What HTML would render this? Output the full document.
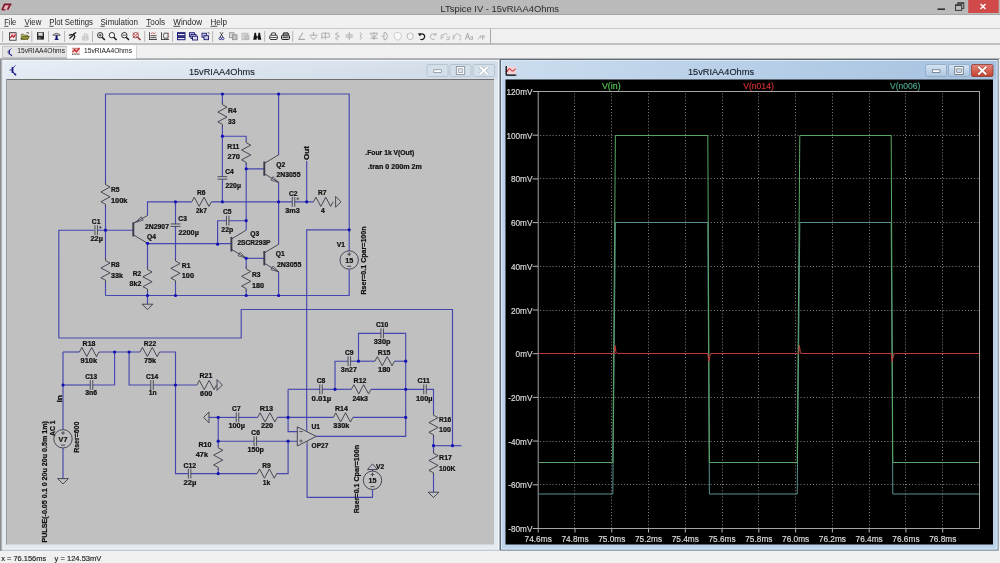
<!DOCTYPE html><html><head><meta charset="utf-8"><style>html,body{margin:0;padding:0;overflow:hidden;background:#f0f0f0}svg{display:block}text{font-family:"Liberation Sans", sans-serif}</style></head><body><svg width="<function W at 0x7f4d14208fe0>" height="563" viewBox="0 0 <function W at 0x7f4d14208fe0> 563" style="will-change:transform"><rect x="0" y="0" width="1000" height="563" fill="#f0f0f0" /><rect x="0" y="0" width="1000" height="14.5" fill="#bababa" /><line x1="0" y1="14.5" x2="1000" y2="14.5" stroke="#a6a6a6" stroke-width="1" /><text x="440.5" y="11.6" font-size="9.4" fill="#2b2b2b" font-weight="normal" text-anchor="start" textLength="118.5" lengthAdjust="spacingAndGlyphs" >LTspice IV - 15vRIAA4Ohms</text><path d="M4.2 4.2 L11.6 4.2 L9.4 9.8 L2 9.8 Z" fill="#e4b4bc" stroke="none"/><path d="M2.0 10 L4.6 4.4 L11.4 4.4 M10.2 4.6 L7.6 9.6" fill="none" stroke="#7e1424" stroke-width="1.7"/><path d="M2.2 9.8 L5.5 9.8" fill="none" stroke="#7e1424" stroke-width="1.2"/><line x1="937.5" y1="9.2" x2="945" y2="9.2" stroke="#2e2e2e" stroke-width="1.6" /><rect x="957.8" y="2.8" width="6" height="5.6" fill="none" stroke="#3a3a3a" stroke-width="1"/><rect x="955.5" y="4.8" width="6.2" height="5.6" fill="#bababa" stroke="#3a3a3a" stroke-width="1"/><line x1="955.5" y1="5.4" x2="961.7" y2="5.4" stroke="#3a3a3a" stroke-width="1.2"/><line x1="957.8" y1="3.3" x2="963.8" y2="3.3" stroke="#3a3a3a" stroke-width="1.2"/><rect x="968.2" y="0" width="30.5" height="13" fill="#d04a4a" /><path d="M980.5 4 L985.5 9 M985.5 4 L980.5 9" stroke="#fff" stroke-width="1.4"/><rect x="0" y="15" width="1000" height="13" fill="#f0f0f0" /><line x1="0" y1="28.5" x2="1000" y2="28.5" stroke="#c9c9c9" stroke-width="1" /><text x="4.2" y="24.7" font-size="8.6" fill="#262626" font-weight="normal" text-anchor="start" textLength="12.1" lengthAdjust="spacingAndGlyphs" >File</text><text x="24.5" y="24.7" font-size="8.6" fill="#262626" font-weight="normal" text-anchor="start" textLength="16.8" lengthAdjust="spacingAndGlyphs" >View</text><text x="49.3" y="24.7" font-size="8.6" fill="#262626" font-weight="normal" text-anchor="start" textLength="43.7" lengthAdjust="spacingAndGlyphs" >Plot Settings</text><text x="100.5" y="24.7" font-size="8.6" fill="#262626" font-weight="normal" text-anchor="start" textLength="37.5" lengthAdjust="spacingAndGlyphs" >Simulation</text><text x="146.3" y="24.7" font-size="8.6" fill="#262626" font-weight="normal" text-anchor="start" textLength="18.7" lengthAdjust="spacingAndGlyphs" >Tools</text><text x="173.3" y="24.7" font-size="8.6" fill="#262626" font-weight="normal" text-anchor="start" textLength="28.7" lengthAdjust="spacingAndGlyphs" >Window</text><text x="210.5" y="24.7" font-size="8.6" fill="#262626" font-weight="normal" text-anchor="start" textLength="16.5" lengthAdjust="spacingAndGlyphs" >Help</text><line x1="4.2" y1="26.3" x2="8.45" y2="26.3" stroke="#262626" stroke-width="0.8" /><line x1="24.5" y1="26.3" x2="28.75" y2="26.3" stroke="#262626" stroke-width="0.8" /><line x1="49.3" y1="26.3" x2="53.55" y2="26.3" stroke="#262626" stroke-width="0.8" /><line x1="100.5" y1="26.3" x2="104.75" y2="26.3" stroke="#262626" stroke-width="0.8" /><line x1="146.3" y1="26.3" x2="150.55" y2="26.3" stroke="#262626" stroke-width="0.8" /><line x1="173.3" y1="26.3" x2="180.10000000000002" y2="26.3" stroke="#262626" stroke-width="0.8" /><line x1="210.5" y1="26.3" x2="217.3" y2="26.3" stroke="#262626" stroke-width="0.8" /><rect x="0" y="29" width="1000" height="15" fill="#f0f0f0" /><line x1="0" y1="44" x2="1000" y2="44" stroke="#8f8f8f" stroke-width="1" /><line x1="2.6" y1="31" x2="2.6" y2="42" stroke="#b5b5b5" stroke-width="1" /><line x1="31.8" y1="31" x2="31.8" y2="42" stroke="#b5b5b5" stroke-width="1" /><line x1="48.6" y1="31" x2="48.6" y2="42" stroke="#b5b5b5" stroke-width="1" /><line x1="64.6" y1="31" x2="64.6" y2="42" stroke="#b5b5b5" stroke-width="1" /><line x1="92.5" y1="31" x2="92.5" y2="42" stroke="#b5b5b5" stroke-width="1" /><line x1="144.7" y1="31" x2="144.7" y2="42" stroke="#b5b5b5" stroke-width="1" /><line x1="172.6" y1="31" x2="172.6" y2="42" stroke="#b5b5b5" stroke-width="1" /><line x1="212.6" y1="31" x2="212.6" y2="42" stroke="#b5b5b5" stroke-width="1" /><line x1="264.7" y1="31" x2="264.7" y2="42" stroke="#b5b5b5" stroke-width="1" /><line x1="292.7" y1="31" x2="292.7" y2="42" stroke="#b5b5b5" stroke-width="1" /><line x1="490.5" y1="28.5" x2="490.5" y2="44" stroke="#a8a8a8" stroke-width="1" /><g transform="translate(9.1,32.2)"><rect x="0.5" y="0.5" width="6.5" height="7.5" fill="#fff" stroke="#303030" stroke-width="0.9"/><path d="M1.2 6 L3 3 L4.5 5 L6.5 2" stroke="#c02a3a" stroke-width="1.4" fill="none"/><rect x="1" y="1" width="5.5" height="1.2" fill="#e8a0a8"/></g><g transform="translate(20.8,32.2)"><path d="M0.5 2 L3 2 L4 3 L7 3 L7 7 L0.5 7 Z" fill="#c8c070" stroke="#606020" stroke-width="0.7"/><path d="M0 7 L2 4.2 L8.5 4.2 L7 7 Z" fill="#9a9a40" stroke="#404010" stroke-width="0.7"/><path d="M5.5 0.5 L7.5 0.2 L8 1.8" stroke="#404040" stroke-width="0.7" fill="none"/></g><g transform="translate(37,32.2)"><rect x="0" y="0" width="7" height="7.4" fill="#2a2a2a"/><rect x="1.3" y="0.6" width="4.4" height="3" fill="#d8d8d8"/><rect x="1.5" y="5" width="2" height="1.8" fill="#777"/></g><g transform="translate(52.3,32.2)"><path d="M0.5 3 Q4.2 -0.8 8 3 L0.5 3 Z" fill="#e8e8e8" stroke="#404040" stroke-width="0.8"/><rect x="3.3" y="3" width="2" height="4.8" fill="#141470"/><rect x="2.4" y="6.6" width="3.8" height="1.2" fill="#141470"/></g><g transform="translate(68.8,32.2)"><path d="M1 6 L3.5 4 L5 1.5 L7 0.5 M5 1.5 L6 4.5 L4.5 7.5 M3.2 2.5 L0.5 3" stroke="#161616" stroke-width="1.2" fill="none" stroke-linecap="round"/></g><g transform="translate(81.6,32.2)"><path d="M1.5 7.5 L1.5 3 M3 7.5 L3 1 M4.5 7.5 L4.5 0.8 M6 7.5 L6 2 M1 5 L6.5 5 L6.5 7.8 L1 7.8 Z" stroke="#c4c4c4" stroke-width="0.9" fill="#ececec"/></g><g transform="translate(96.9,32.2)"><circle cx="3.3" cy="3" r="2.7" fill="#fafafa" stroke="#1e1e1e" stroke-width="0.9"/><path d="M5.2 5 L8 7.8" stroke="#1e1e1e" stroke-width="1.6"/><path d="M1.8 3 L4.8 3 M3.3 1.5 L3.3 4.5" stroke="#1e1e1e" stroke-width="0.8"/></g><g transform="translate(108.6,32.2)"><circle cx="3.3" cy="3" r="2.7" fill="#fafafa" stroke="#1e1e1e" stroke-width="0.9"/><path d="M5.2 5 L8 7.8" stroke="#1e1e1e" stroke-width="1.6"/></g><g transform="translate(121,32.2)"><circle cx="3.3" cy="3" r="2.7" fill="#fafafa" stroke="#1e1e1e" stroke-width="0.9"/><path d="M5.2 5 L8 7.8" stroke="#1e1e1e" stroke-width="1.6"/><path d="M1.8 3 L4.8 3" stroke="#1e1e1e" stroke-width="0.8"/></g><g transform="translate(132.4,32.2)"><circle cx="3.3" cy="3" r="2.7" fill="#fafafa" stroke="#8a3a3a" stroke-width="0.9"/><path d="M5.2 5 L8 7.8" stroke="#8a3a3a" stroke-width="1.6"/><path d="M0.5 0.5 L6 6 M6 0.5 L0.5 6" stroke="#c04040" stroke-width="0.9"/></g><g transform="translate(149,32.2)"><path d="M0 7.3 L8 7.3 M0.5 0 L0.5 7.3 M1.5 5.5 L7.5 5.5 M1.5 3.5 L7.5 3.5" stroke="#202020" stroke-width="0.8"/><path d="M2 1.5 L3.5 0.5 L5 1.5 L6.5 0.5" stroke="#c04040" stroke-width="0.8" fill="none"/></g><g transform="translate(161,32.2)"><path d="M0 7.3 L8 7.3 M0.5 0 L0.5 7.3" stroke="#202020" stroke-width="0.8"/><path d="M3 1 L7 1 L7 6 L3 6 Q2 3.5 3 1" stroke="#303030" stroke-width="0.8" fill="none"/><path d="M7.5 0.5 L7.5 6.5" stroke="#c04040" stroke-width="0.6" stroke-dasharray="1 1"/></g><g transform="translate(177,32.2)"><rect x="0.5" y="0.5" width="7.5" height="3" fill="#e8e8f4" stroke="#1a1a70" stroke-width="1"/><rect x="0.5" y="4.5" width="7.5" height="3" fill="#e8e8f4" stroke="#1a1a70" stroke-width="1"/><rect x="0.5" y="0.5" width="7.5" height="1.2" fill="#1a1a70"/><rect x="0.5" y="4.5" width="7.5" height="1.2" fill="#1a1a70"/></g><g transform="translate(189,32.2)"><rect x="0.5" y="0.5" width="5" height="4" fill="#c8c8e0" stroke="#1a1a70" stroke-width="0.9"/><rect x="2" y="2.2" width="5" height="4" fill="#c8c8e0" stroke="#1a1a70" stroke-width="0.9"/><rect x="3.5" y="4" width="5" height="3.8" fill="#e0e0f0" stroke="#1a1a70" stroke-width="0.9"/></g><g transform="translate(201.5,32.2)"><rect x="0.5" y="1" width="4.5" height="4" fill="#c8c8e0" stroke="#1a1a70" stroke-width="0.9"/><rect x="2.5" y="3.5" width="4.5" height="4" fill="#c8c8e0" stroke="#1a1a70" stroke-width="0.9"/><path d="M6 0.5 L7.5 0.5 L7.5 2" stroke="#404040" stroke-width="0.6" fill="none"/></g><g transform="translate(219,32.2)"><path d="M1 0 L4 5 M4 0 L1 5" stroke="#2a2a2a" stroke-width="0.8"/><circle cx="1.2" cy="6.3" r="1.2" fill="none" stroke="#1a1a80" stroke-width="0.8"/><circle cx="3.8" cy="6.3" r="1.2" fill="none" stroke="#1a1a80" stroke-width="0.8"/></g><g transform="translate(229,32.2)"><rect x="0.5" y="0.5" width="4.5" height="5" fill="#d8d8d8" stroke="#909090" stroke-width="0.8"/><rect x="3.5" y="2.5" width="4.5" height="5" fill="#c0c0c0" stroke="#909090" stroke-width="0.8"/></g><g transform="translate(241.5,32.2)"><rect x="0.5" y="1" width="6" height="6.5" fill="#d4d4d4" stroke="#b8b8b8" stroke-width="0.8"/><rect x="3.5" y="3.5" width="4" height="4" fill="#c4c4c4" stroke="#b0b0b0" stroke-width="0.7"/></g><g transform="translate(253,32.2)"><path d="M1.5 0.5 L3 0.5 L3.5 4 L5 4 L5.5 0.5 L7 0.5 L8.3 7.5 L5 7.5 L4.5 5 L4 5 L3.5 7.5 L0.2 7.5 Z" fill="#141414"/></g><g transform="translate(269.3,32.2)"><path d="M2 3 L2.5 0.7 L6 0.7 L6.5 3" stroke="#202020" stroke-width="0.8" fill="#fff"/><rect x="0.5" y="3" width="7.5" height="4.3" rx="1" fill="#f4f4f4" stroke="#202020" stroke-width="0.9"/><path d="M1 5.3 L7.5 5.3" stroke="#202020" stroke-width="0.7"/></g><g transform="translate(281,32.2)"><path d="M2 3 L2.5 0.7 L7 0.7 L7.5 3" stroke="#202020" stroke-width="1.0" fill="#b0b0b0"/><rect x="0.5" y="3" width="8" height="4.3" rx="1" fill="#d0d0d0" stroke="#202020" stroke-width="1"/><path d="M1.5 5 L7.5 5" stroke="#202020" stroke-width="1"/></g><g transform="translate(297.9,32.2)"><path d="M0.5 7.2 L7 7.2 M1 6.5 L5 0.5" stroke="#a8a8a8" stroke-width="1.1"/></g><g transform="translate(309.6,32.2)"><path d="M4 0 L4 3 M0 3 L8 3 M1 4.5 L4 7.5 L7 4.5" stroke="#a0a0a0" stroke-width="0.9" fill="none"/></g><g transform="translate(321.3,32.2)"><path d="M0.5 1 L0.5 7 M0.5 1 L8 1 L8 5 L0.5 5 M4 0 L4 7.5" stroke="#b0b0b0" stroke-width="1" fill="none"/></g><g transform="translate(334.3,32.2)"><path d="M4 0 L1 2 L5 4 L1 6 L4 8" stroke="#a8a8a8" stroke-width="0.9" fill="none"/></g><g transform="translate(345.3,32.2)"><path d="M4 0 L4 2.8 M0.5 2.8 L7.5 2.8 M0.5 4.8 L7.5 4.8 M4 4.8 L4 8" stroke="#a0a0a0" stroke-width="0.9" fill="none"/></g><g transform="translate(359.6,32.2)"><path d="M0.5 0.5 Q3.5 1.5 0.5 4 Q3.5 5 0.5 7.5" stroke="#a8a8a8" stroke-width="0.9" fill="none"/></g><g transform="translate(370.2,32.2)"><path d="M0 1 L7.5 1 L3.8 6 Z M0 6 L7.5 6 M3.8 0 L3.8 8" stroke="#a8a8a8" stroke-width="0.9" fill="none"/></g><g transform="translate(381.5,32.2)"><path d="M0 4 L2.5 4 M2.5 0.5 L2.5 7.5 M2.5 0.5 L4.5 0.5 Q7.5 4 4.5 7.5 L2.5 7.5" stroke="#a8a8a8" stroke-width="0.9" fill="none"/></g><g transform="translate(393.5,32.2)"><path d="M1 4 Q0 1 2 1 L2.5 0.2 L4 0.5 L5.5 0.2 L6.5 1 Q8.5 2 7.5 5 Q6 8 4 7.8 Q1.5 7.5 1 4 Z" stroke="#b0b0b0" stroke-width="0.9" fill="#f8f8f8" stroke-dasharray="1.2 0.6"/></g><g transform="translate(406.2,32.2)"><path d="M1 4 L1 2 L3 1.5 L4 0.5 L5 1.5 L6.5 1.8 L7 5 Q5.5 7.8 3.5 7.5 Q1 6.5 1 4 Z" stroke="#b0b0b0" stroke-width="0.9" fill="#f8f8f8"/></g><g transform="translate(417.5,32.2)"><path d="M2.2 2.6 Q4.5 0.8 6.5 2.5 Q8 4.5 6.2 6.6 Q4.5 7.8 2.8 7" stroke="#1a1a1a" stroke-width="1.2" fill="none"/><path d="M0.3 1.2 L3.6 1.0 L2.6 4.4 Z" fill="#1a1a1a"/></g><g transform="translate(429.5,32.2)"><path d="M5.8 2.6 Q3.5 0.8 1.5 2.5 Q0 4.5 1.8 6.6 Q3.5 7.8 5.2 7" stroke="#b4b4b4" stroke-width="1.0" fill="none"/><path d="M7.7 1.2 L4.4 1.0 L5.4 4.4 Z" fill="#b4b4b4"/></g><g transform="translate(440.7,32.2)"><path d="M2.5 3 Q4.5 -0.5 6.5 3 M0.5 7.5 L0.5 3 L3 3 M1 5.2 L3 5.2 M5.5 7.5 L8.5 7.5 L8.5 4 M6 5 L7.5 5" stroke="#a8a8a8" stroke-width="0.8" fill="none"/></g><g transform="translate(452.7,32.2)"><path d="M2 3.5 Q4.5 -0.5 7 3.5 M0.5 7.5 L0.5 3.5 L2.5 3.5 M1 5.5 L2.5 5.5 M6.5 3.5 L8.5 3.5 M7 5.5 L8.5 5.5 M6.5 7.5 L8.5 7.5" stroke="#a8a8a8" stroke-width="0.8" fill="none"/></g><g transform="translate(465.4,32.2)"><path d="M0 7.5 L2.2 1 L4.2 7.5 M1 5 L3.4 5" stroke="#a0a0a0" stroke-width="0.9" fill="none"/><path d="M5 5.5 Q5.5 4 7 4.2 L7 7.5 Q5 8 5 6.3" stroke="#a0a0a0" stroke-width="0.8" fill="none"/></g><g transform="translate(477.4,32.2)"><circle cx="1" cy="6.5" r="0.6" fill="#a8a8a8"/><path d="M2.5 4 Q3.2 2.8 4.2 4 Q3.5 6 2.5 5.5 Z M5.2 3 L5.2 7.8 M5.2 3.5 Q7.5 3 7 5.2 Q6 6 5.2 5.3" stroke="#a8a8a8" stroke-width="0.8" fill="none"/></g><rect x="0" y="45" width="1000" height="13.5" fill="#f0f0f0" /><line x1="0" y1="58.5" x2="1000" y2="58.5" stroke="#b4b4b4" stroke-width="1" /><rect x="2.5" y="46.5" width="64.5" height="11" fill="#e4e4e4" stroke="#c4c4c4" stroke-width="1"/><rect x="67" y="45.5" width="69" height="13" fill="#ffffff" /><line x1="136.5" y1="45.5" x2="136.5" y2="58" stroke="#d4d4d4" stroke-width="1" /><text x="17.3" y="53.4" font-size="7.3" fill="#202020" font-weight="normal" text-anchor="start" textLength="47.7" lengthAdjust="spacingAndGlyphs" >15vRIAA4Ohms</text><g transform="translate(6.5,47.8)" fill="none" stroke="#20208a"><path d="M2.8 2 L2.8 6.6" stroke-width="1.4"/><path d="M0.6 4.3 L2.8 4.3" stroke-width="0.7"/><path d="M2.8 3 L5 0.6" stroke-width="0.7"/><path d="M2.8 5.6 L4.8 7.6" stroke-width="0.9"/><circle cx="4.9" cy="7.6" r="0.8" fill="#20208a" stroke="none"/></g><g transform="translate(72,47.2)"><rect x="0" y="0" width="8" height="7.2" fill="#f6d8d8"/><path d="M0.5 5 L2.5 2.5 L4.5 4.5 L7.5 1" fill="none" stroke="#c02828" stroke-width="1.3"/><rect x="0.3" y="1" width="7.5" height="1" fill="#a02020" opacity="0.6"/><path d="M0 7 L8 7" stroke="#303030" stroke-width="1" stroke-dasharray="1 0.6"/></g><text x="84" y="53.2" font-size="7.3" fill="#202020" font-weight="normal" text-anchor="start" textLength="48" lengthAdjust="spacingAndGlyphs" >15vRIAA4Ohms</text><rect x="0" y="59" width="2" height="492" fill="#8c8c8c" /><defs><linearGradient id="gi" x1="0" y1="0" x2="1" y2="0.3"><stop offset="0" stop-color="#e8eef5"/><stop offset="1" stop-color="#d2dde9"/></linearGradient><linearGradient id="ga" x1="0" y1="0" x2="1" y2="0"><stop offset="0" stop-color="#cbdcee"/><stop offset="0.45" stop-color="#b9d0e8"/><stop offset="1" stop-color="#a6c2e0"/></linearGradient><linearGradient id="gbtn" x1="0" y1="0" x2="0" y2="1"><stop offset="0" stop-color="#d4e3f2"/><stop offset="1" stop-color="#adc6e0"/></linearGradient><linearGradient id="gclose" x1="0" y1="0" x2="0" y2="1"><stop offset="0" stop-color="#e4877a"/><stop offset="1" stop-color="#c4402e"/></linearGradient><clipPath id="schclip"><rect x="6" y="79" width="488" height="465.5"/></clipPath><clipPath id="pltclip"><rect x="505.5" y="79.5" width="487.5" height="465"/></clipPath></defs><rect x="1.5" y="59" width="498.5" height="491.5" fill="#e2e9f1"/><rect x="2.5" y="60" width="496.5" height="19.5" fill="url(#gi)"/><rect x="2.0" y="59.5" width="497.5" height="490.5" fill="none" stroke="#a4acb6" stroke-width="1"/><rect x="3.0" y="60.5" width="495.5" height="488.5" fill="none" stroke="#f4f7fa" stroke-width="1"/><text x="188.9" y="74.8" font-size="9.4" fill="#141c28" font-weight="normal" text-anchor="start" textLength="65.9" lengthAdjust="spacingAndGlyphs" stroke="#141c28" stroke-width="0.12">15vRIAA4Ohms</text><rect x="427" y="64.5" width="21" height="12" rx="1.5" fill="#d4dfea" stroke="#aebdcc" stroke-width="0.8"/><rect x="450" y="64.5" width="21" height="12" rx="1.5" fill="#d4dfea" stroke="#aebdcc" stroke-width="0.8"/><rect x="473" y="64.5" width="21.5" height="12" rx="1.5" fill="#d4dfea" stroke="#aebdcc" stroke-width="0.8"/><rect x="433.8" y="69.8" width="7.6" height="2.6" fill="#fff" stroke="#7a8692" stroke-width="0.7"/><rect x="456.3" y="66.6" width="8.4" height="7.8" fill="#fff" stroke="#7a8692" stroke-width="0.8"/><rect x="458.2" y="68.8" width="4.6" height="3.6" fill="#dde6ef" stroke="#7a8692" stroke-width="0.6"/><path d="M479.8 66.8 L487.8 74.4 M487.8 66.8 L479.8 74.4" stroke="#7a8692" stroke-width="3.2" opacity="0.55"/><path d="M479.8 66.8 L487.8 74.4 M487.8 66.8 L479.8 74.4" stroke="#fff" stroke-width="2.0"/><rect x="500" y="59" width="498.5" height="491.5" fill="#bcd3ea"/><rect x="501" y="60" width="496.5" height="19.5" fill="url(#ga)"/><rect x="500.5" y="59.5" width="497.5" height="490.5" fill="none" stroke="#5e6e7c" stroke-width="1"/><rect x="501.5" y="60.5" width="495.5" height="488.5" fill="none" stroke="#dbe8f4" stroke-width="1"/><text x="687.9" y="74.8" font-size="9.4" fill="#141c28" font-weight="normal" text-anchor="start" textLength="66.1" lengthAdjust="spacingAndGlyphs" stroke="#141c28" stroke-width="0.12">15vRIAA4Ohms</text><rect x="925.5" y="64.5" width="21" height="12" rx="1.5" fill="url(#gbtn)" stroke="#8ea8c4" stroke-width="0.8"/><rect x="948.5" y="64.5" width="21" height="12" rx="1.5" fill="url(#gbtn)" stroke="#8ea8c4" stroke-width="0.8"/><rect x="971.5" y="64.5" width="21.5" height="12" rx="1.5" fill="url(#gclose)" stroke="#8c3a30" stroke-width="0.8"/><rect x="932.3" y="69.8" width="7.6" height="2.6" fill="#fff" stroke="#5a6672" stroke-width="0.7"/><rect x="954.8" y="66.6" width="8.4" height="7.8" fill="#fff" stroke="#5a6672" stroke-width="0.8"/><rect x="956.7" y="68.8" width="4.6" height="3.6" fill="#c8d8ea" stroke="#5a6672" stroke-width="0.6"/><path d="M978.3 66.8 L986.3 74.4 M986.3 66.8 L978.3 74.4" stroke="#7a2a20" stroke-width="3.2" opacity="0.55"/><path d="M978.3 66.8 L986.3 74.4 M986.3 66.8 L978.3 74.4" stroke="#fff" stroke-width="2.0"/><rect x="6" y="79" width="488" height="465.5" fill="#c0c0c0" /><line x1="6" y1="79.5" x2="494" y2="79.5" stroke="#6e6e6e" stroke-width="1" /><line x1="6.5" y1="79" x2="6.5" y2="544.5" stroke="#9a9a9a" stroke-width="1" /><rect x="505.5" y="79.5" width="487.5" height="465" fill="#000000" /><g transform="translate(9,64.5)" fill="none" stroke="#1a1a8a"><path d="M3.5 2.6 L3.5 8.4" stroke-width="1.8"/><path d="M0.5 5.5 L3.5 5.5" stroke-width="0.8"/><path d="M3.5 3.8 L6.5 0.8" stroke-width="0.8"/><path d="M3.5 7.2 L6.2 9.8" stroke-width="1.1"/><circle cx="6.3" cy="10" r="1.1" fill="#1a1a8a" stroke="none"/></g><g transform="translate(505.5,65.5)"><rect x="1.5" y="1" width="9" height="8" fill="#f0d4d8"/><path d="M1.5 6.5 Q3.5 1.5 5.5 4.5 Q7.5 7 10 3" fill="none" stroke="#d03a3a" stroke-width="1.1"/><path d="M0.8 0.5 L0.8 9.6 L10.8 9.6" fill="none" stroke="#1a1a1a" stroke-width="1.3"/><path d="M0 2 L1.5 2 M0 4 L1.5 4 M0 6 L1.5 6 M0 8 L1.5 8 M2.5 10.6 L2.5 9 M4.5 10.6 L4.5 9 M6.5 10.6 L6.5 9 M8.5 10.6 L8.5 9" stroke="#1a1a1a" stroke-width="0.8"/></g><g clip-path="url(#pltclip)"><line x1="574.5" y1="93.5" x2="574.5" y2="528.5" stroke="#858585" stroke-width="1" stroke-dasharray="1 2.1" /><line x1="611.5" y1="93.5" x2="611.5" y2="528.5" stroke="#858585" stroke-width="1" stroke-dasharray="1 2.1" /><line x1="648.5" y1="93.5" x2="648.5" y2="528.5" stroke="#858585" stroke-width="1" stroke-dasharray="1 2.1" /><line x1="685.5" y1="93.5" x2="685.5" y2="528.5" stroke="#858585" stroke-width="1" stroke-dasharray="1 2.1" /><line x1="722.5" y1="93.5" x2="722.5" y2="528.5" stroke="#858585" stroke-width="1" stroke-dasharray="1 2.1" /><line x1="758.5" y1="93.5" x2="758.5" y2="528.5" stroke="#858585" stroke-width="1" stroke-dasharray="1 2.1" /><line x1="795.5" y1="93.5" x2="795.5" y2="528.5" stroke="#858585" stroke-width="1" stroke-dasharray="1 2.1" /><line x1="832.5" y1="93.5" x2="832.5" y2="528.5" stroke="#858585" stroke-width="1" stroke-dasharray="1 2.1" /><line x1="869.5" y1="93.5" x2="869.5" y2="528.5" stroke="#858585" stroke-width="1" stroke-dasharray="1 2.1" /><line x1="905.5" y1="93.5" x2="905.5" y2="528.5" stroke="#858585" stroke-width="1" stroke-dasharray="1 2.1" /><line x1="942.5" y1="93.5" x2="942.5" y2="528.5" stroke="#858585" stroke-width="1" stroke-dasharray="1 2.1" /><line x1="540.2" y1="135.5" x2="979.5" y2="135.5" stroke="#858585" stroke-width="1" stroke-dasharray="1 2.1" /><line x1="540.2" y1="178.5" x2="979.5" y2="178.5" stroke="#858585" stroke-width="1" stroke-dasharray="1 2.1" /><line x1="540.2" y1="222.5" x2="979.5" y2="222.5" stroke="#858585" stroke-width="1" stroke-dasharray="1 2.1" /><line x1="540.2" y1="266.5" x2="979.5" y2="266.5" stroke="#858585" stroke-width="1" stroke-dasharray="1 2.1" /><line x1="540.2" y1="310.5" x2="979.5" y2="310.5" stroke="#858585" stroke-width="1" stroke-dasharray="1 2.1" /><line x1="540.2" y1="353.5" x2="979.5" y2="353.5" stroke="#858585" stroke-width="1" stroke-dasharray="1 2.1" /><line x1="540.2" y1="397.5" x2="979.5" y2="397.5" stroke="#858585" stroke-width="1" stroke-dasharray="1 2.1" /><line x1="540.2" y1="441.5" x2="979.5" y2="441.5" stroke="#858585" stroke-width="1" stroke-dasharray="1 2.1" /><line x1="540.2" y1="484.5" x2="979.5" y2="484.5" stroke="#858585" stroke-width="1" stroke-dasharray="1 2.1" /><rect x="538.2" y="91.5" width="441.29999999999995" height="437.0" fill="none" stroke="#a4a4a4" stroke-width="1"/><line x1="532.7" y1="91.5" x2="538.2" y2="91.5" stroke="#b4b4b4" stroke-width="1" /><text x="532.4" y="95.0" font-size="9.2" fill="#dcdcdc" font-weight="normal" text-anchor="end" textLength="25.9" lengthAdjust="spacingAndGlyphs" stroke="#dcdcdc" stroke-width="0.18">120mV</text><line x1="532.7" y1="135.2" x2="538.2" y2="135.2" stroke="#b4b4b4" stroke-width="1" /><text x="532.4" y="138.7" font-size="9.2" fill="#dcdcdc" font-weight="normal" text-anchor="end" textLength="25.9" lengthAdjust="spacingAndGlyphs" stroke="#dcdcdc" stroke-width="0.18">100mV</text><line x1="532.7" y1="178.9" x2="538.2" y2="178.9" stroke="#b4b4b4" stroke-width="1" /><text x="532.4" y="182.4" font-size="9.2" fill="#dcdcdc" font-weight="normal" text-anchor="end" textLength="21.4" lengthAdjust="spacingAndGlyphs" stroke="#dcdcdc" stroke-width="0.18">80mV</text><line x1="532.7" y1="222.6" x2="538.2" y2="222.6" stroke="#b4b4b4" stroke-width="1" /><text x="532.4" y="226.1" font-size="9.2" fill="#dcdcdc" font-weight="normal" text-anchor="end" textLength="21.4" lengthAdjust="spacingAndGlyphs" stroke="#dcdcdc" stroke-width="0.18">60mV</text><line x1="532.7" y1="266.3" x2="538.2" y2="266.3" stroke="#b4b4b4" stroke-width="1" /><text x="532.4" y="269.8" font-size="9.2" fill="#dcdcdc" font-weight="normal" text-anchor="end" textLength="21.4" lengthAdjust="spacingAndGlyphs" stroke="#dcdcdc" stroke-width="0.18">40mV</text><line x1="532.7" y1="310.0" x2="538.2" y2="310.0" stroke="#b4b4b4" stroke-width="1" /><text x="532.4" y="313.5" font-size="9.2" fill="#dcdcdc" font-weight="normal" text-anchor="end" textLength="21.4" lengthAdjust="spacingAndGlyphs" stroke="#dcdcdc" stroke-width="0.18">20mV</text><line x1="532.7" y1="353.7" x2="538.2" y2="353.7" stroke="#b4b4b4" stroke-width="1" /><text x="532.4" y="357.2" font-size="9.2" fill="#dcdcdc" font-weight="normal" text-anchor="end" textLength="16.8" lengthAdjust="spacingAndGlyphs" stroke="#dcdcdc" stroke-width="0.18">0mV</text><line x1="532.7" y1="397.4" x2="538.2" y2="397.4" stroke="#b4b4b4" stroke-width="1" /><text x="532.4" y="400.9" font-size="9.2" fill="#dcdcdc" font-weight="normal" text-anchor="end" textLength="24.1" lengthAdjust="spacingAndGlyphs" stroke="#dcdcdc" stroke-width="0.18">-20mV</text><line x1="532.7" y1="441.1" x2="538.2" y2="441.1" stroke="#b4b4b4" stroke-width="1" /><text x="532.4" y="444.6" font-size="9.2" fill="#dcdcdc" font-weight="normal" text-anchor="end" textLength="24.1" lengthAdjust="spacingAndGlyphs" stroke="#dcdcdc" stroke-width="0.18">-40mV</text><line x1="532.7" y1="484.8" x2="538.2" y2="484.8" stroke="#b4b4b4" stroke-width="1" /><text x="532.4" y="488.3" font-size="9.2" fill="#dcdcdc" font-weight="normal" text-anchor="end" textLength="24.1" lengthAdjust="spacingAndGlyphs" stroke="#dcdcdc" stroke-width="0.18">-60mV</text><line x1="532.7" y1="528.5" x2="538.2" y2="528.5" stroke="#b4b4b4" stroke-width="1" /><text x="532.4" y="532.0" font-size="9.2" fill="#dcdcdc" font-weight="normal" text-anchor="end" textLength="24.1" lengthAdjust="spacingAndGlyphs" stroke="#dcdcdc" stroke-width="0.18">-80mV</text><line x1="538.2" y1="528.5" x2="538.2" y2="532.5" stroke="#b4b4b4" stroke-width="1" /><text x="538.2" y="542.3" font-size="9.2" fill="#dcdcdc" font-weight="normal" text-anchor="middle" textLength="27.2" lengthAdjust="spacingAndGlyphs" stroke="#dcdcdc" stroke-width="0.18">74.6ms</text><line x1="574.9750000000006" y1="528.5" x2="574.9750000000006" y2="532.5" stroke="#b4b4b4" stroke-width="1" /><text x="574.9750000000006" y="542.3" font-size="9.2" fill="#dcdcdc" font-weight="normal" text-anchor="middle" textLength="27.2" lengthAdjust="spacingAndGlyphs" stroke="#dcdcdc" stroke-width="0.18">74.8ms</text><line x1="611.7500000000011" y1="528.5" x2="611.7500000000011" y2="532.5" stroke="#b4b4b4" stroke-width="1" /><text x="611.7500000000011" y="542.3" font-size="9.2" fill="#dcdcdc" font-weight="normal" text-anchor="middle" textLength="27.2" lengthAdjust="spacingAndGlyphs" stroke="#dcdcdc" stroke-width="0.18">75.0ms</text><line x1="648.524999999999" y1="528.5" x2="648.524999999999" y2="532.5" stroke="#b4b4b4" stroke-width="1" /><text x="648.524999999999" y="542.3" font-size="9.2" fill="#dcdcdc" font-weight="normal" text-anchor="middle" textLength="27.2" lengthAdjust="spacingAndGlyphs" stroke="#dcdcdc" stroke-width="0.18">75.2ms</text><line x1="685.2999999999995" y1="528.5" x2="685.2999999999995" y2="532.5" stroke="#b4b4b4" stroke-width="1" /><text x="685.2999999999995" y="542.3" font-size="9.2" fill="#dcdcdc" font-weight="normal" text-anchor="middle" textLength="27.2" lengthAdjust="spacingAndGlyphs" stroke="#dcdcdc" stroke-width="0.18">75.4ms</text><line x1="722.075" y1="528.5" x2="722.075" y2="532.5" stroke="#b4b4b4" stroke-width="1" /><text x="722.075" y="542.3" font-size="9.2" fill="#dcdcdc" font-weight="normal" text-anchor="middle" textLength="27.2" lengthAdjust="spacingAndGlyphs" stroke="#dcdcdc" stroke-width="0.18">75.6ms</text><line x1="758.8500000000006" y1="528.5" x2="758.8500000000006" y2="532.5" stroke="#b4b4b4" stroke-width="1" /><text x="758.8500000000006" y="542.3" font-size="9.2" fill="#dcdcdc" font-weight="normal" text-anchor="middle" textLength="27.2" lengthAdjust="spacingAndGlyphs" stroke="#dcdcdc" stroke-width="0.18">75.8ms</text><line x1="795.6250000000011" y1="528.5" x2="795.6250000000011" y2="532.5" stroke="#b4b4b4" stroke-width="1" /><text x="795.6250000000011" y="542.3" font-size="9.2" fill="#dcdcdc" font-weight="normal" text-anchor="middle" textLength="27.2" lengthAdjust="spacingAndGlyphs" stroke="#dcdcdc" stroke-width="0.18">76.0ms</text><line x1="832.399999999999" y1="528.5" x2="832.399999999999" y2="532.5" stroke="#b4b4b4" stroke-width="1" /><text x="832.399999999999" y="542.3" font-size="9.2" fill="#dcdcdc" font-weight="normal" text-anchor="middle" textLength="27.2" lengthAdjust="spacingAndGlyphs" stroke="#dcdcdc" stroke-width="0.18">76.2ms</text><line x1="869.1749999999995" y1="528.5" x2="869.1749999999995" y2="532.5" stroke="#b4b4b4" stroke-width="1" /><text x="869.1749999999995" y="542.3" font-size="9.2" fill="#dcdcdc" font-weight="normal" text-anchor="middle" textLength="27.2" lengthAdjust="spacingAndGlyphs" stroke="#dcdcdc" stroke-width="0.18">76.4ms</text><line x1="905.95" y1="528.5" x2="905.95" y2="532.5" stroke="#b4b4b4" stroke-width="1" /><text x="905.95" y="542.3" font-size="9.2" fill="#dcdcdc" font-weight="normal" text-anchor="middle" textLength="27.2" lengthAdjust="spacingAndGlyphs" stroke="#dcdcdc" stroke-width="0.18">76.6ms</text><line x1="942.7250000000006" y1="528.5" x2="942.7250000000006" y2="532.5" stroke="#b4b4b4" stroke-width="1" /><text x="942.7250000000006" y="542.3" font-size="9.2" fill="#dcdcdc" font-weight="normal" text-anchor="middle" textLength="27.2" lengthAdjust="spacingAndGlyphs" stroke="#dcdcdc" stroke-width="0.18">76.8ms</text><text x="611.3" y="88.8" font-size="8.8" fill="#58c858" font-weight="normal" text-anchor="middle" stroke="#58c858" stroke-width="0.15">V(in)</text><text x="758.5" y="88.8" font-size="8.6" fill="#d43030" font-weight="normal" text-anchor="middle" stroke="#d43030" stroke-width="0.15">V(n014)</text><text x="905.2" y="88.8" font-size="8.5" fill="#50a892" font-weight="normal" text-anchor="middle" stroke="#50a892" stroke-width="0.15">V(n006)</text><path d="M538.7 494.0 L612.8 494.0 L615.4 222.5 L707.8 222.5 L709.4 494.0 L797.2 494.0 L799.8 222.5 L891.2 222.5 L892.8 494.0 L979.0 494.0" fill="none" stroke="#5a9092" stroke-width="1"/><path d="M538.7 462.5 L612.8 462.5 L615.4 135.5 L707.8 135.5 L709.4 462.5 L797.2 462.5 L799.8 135.5 L891.2 135.5 L892.8 462.5 L979.0 462.5" fill="none" stroke="#5aa764" stroke-width="1"/><path d="M538.7 353.5 L614.3 353.5 L615.0 345.5 L616.0 352.5 L617.8 353.5 L707.8 353.5 L708.8 361.5 L710.3 354.5 L711.8 353.5 L798.7 353.5 L799.4 345.5 L800.4 352.5 L802.2 353.5 L891.2 353.5 L892.2 361.5 L893.7 354.5 L895.2 353.5 L979.0 353.5" fill="none" stroke="#c03a3a" stroke-width="1"/></g><g clip-path="url(#schclip)"><path d="M105.5 183.5 L105.5 94 L349.2 94 L349.2 251" fill="none" stroke="#4646b0" stroke-width="1.15"/><path d="M222.4 94 L222.4 103.4" fill="none" stroke="#4646b0" stroke-width="1.15"/><path d="M222.4 126 L222.4 176.8" fill="none" stroke="#4646b0" stroke-width="1.15"/><path d="M222.4 179.0 L222.4 201.8" fill="none" stroke="#4646b0" stroke-width="1.15"/><path d="M222.4 136.2 L246.2 136.2 L246.2 140.8" fill="none" stroke="#4646b0" stroke-width="1.15"/><path d="M246.2 163.2 L246.2 220.7 L217.6 220.7 L217.6 244.2" fill="none" stroke="#4646b0" stroke-width="1.15"/><path d="M246.2 168.8 L264.3 168.8" fill="none" stroke="#4646b0" stroke-width="1.15"/><path d="M278.6 94 L278.6 155.0" fill="none" stroke="#4646b0" stroke-width="1.15"/><path d="M278.6 182.6 L278.6 244.2" fill="none" stroke="#4646b0" stroke-width="1.15"/><path d="M264.3 258.3 L246.2 258.3" fill="none" stroke="#4646b0" stroke-width="1.15"/><path d="M278.6 271.9 L278.6 295.5" fill="none" stroke="#4646b0" stroke-width="1.15"/><path d="M147.5 215.5 L147.5 201.8 L191.8 201.8" fill="none" stroke="#4646b0" stroke-width="1.15"/><path d="M211.4 201.8 L292.5 201.8" fill="none" stroke="#4646b0" stroke-width="1.15"/><path d="M294.5 201.8 L313.5 201.8" fill="none" stroke="#4646b0" stroke-width="1.15"/><path d="M306.7 161 L306.7 201.8" fill="none" stroke="#4646b0" stroke-width="1.15"/><path d="M349.2 229.8 L306.7 229.8 L306.7 430.6" fill="none" stroke="#4646b0" stroke-width="1.15"/><path d="M349.2 269.5 L349.2 295.5 L105.5 295.5" fill="none" stroke="#4646b0" stroke-width="1.15"/><path d="M58.8 338.0 L58.8 230.2 L94.0 230.2" fill="none" stroke="#4646b0" stroke-width="1.15"/><path d="M96.5 230.2 L133.3 230.2" fill="none" stroke="#4646b0" stroke-width="1.15"/><path d="M105.5 205.5 L105.5 259.4" fill="none" stroke="#4646b0" stroke-width="1.15"/><path d="M105.5 281.5 L105.5 295.5" fill="none" stroke="#4646b0" stroke-width="1.15"/><path d="M147.5 243.3 L147.5 268.3" fill="none" stroke="#4646b0" stroke-width="1.15"/><path d="M147.5 290.5 L147.5 304.2" fill="none" stroke="#4646b0" stroke-width="1.15"/><path d="M147.5 243.6 L231.4 243.6" fill="none" stroke="#4646b0" stroke-width="1.15"/><path d="M175.5 201.8 L175.5 259.8" fill="none" stroke="#4646b0" stroke-width="1.15"/><path d="M175.5 282 L175.5 295.5" fill="none" stroke="#4646b0" stroke-width="1.15"/><path d="M246.2 220.7 L246.2 230.3" fill="none" stroke="#4646b0" stroke-width="1.15"/><path d="M246.2 258.3 L246.2 267.7" fill="none" stroke="#4646b0" stroke-width="1.15"/><path d="M246.2 290 L246.2 295.5" fill="none" stroke="#4646b0" stroke-width="1.15"/><path d="M58.8 338.0 L241.2 338.0 L241.2 309.5 L452.5 309.5 L452.5 445.7" fill="none" stroke="#4646b0" stroke-width="1.15"/><path d="M63 352 L79.4 352" fill="none" stroke="#4646b0" stroke-width="1.15"/><path d="M99 352 L140 352" fill="none" stroke="#4646b0" stroke-width="1.15"/><path d="M159.6 352 L175.5 352 L175.5 473.6 L188.6 473.6" fill="none" stroke="#4646b0" stroke-width="1.15"/><path d="M63 352 L63 429.5" fill="none" stroke="#4646b0" stroke-width="1.15"/><path d="M63 448 L63 478.6" fill="none" stroke="#4646b0" stroke-width="1.15"/><path d="M63 385 L90.5 385" fill="none" stroke="#4646b0" stroke-width="1.15"/><path d="M92.5 385 L114.6 385 L114.6 352" fill="none" stroke="#4646b0" stroke-width="1.15"/><path d="M129.1 352 L129.1 385 L151.0 385" fill="none" stroke="#4646b0" stroke-width="1.15"/><path d="M153.0 385 L175.5 385 L196.9 385" fill="none" stroke="#4646b0" stroke-width="1.15"/><path d="M190.6 473.6 L257.1 473.6" fill="none" stroke="#4646b0" stroke-width="1.15"/><path d="M276.7 473.6 L288.1 473.6 L288.1 441.2 L297.3 441.2" fill="none" stroke="#4646b0" stroke-width="1.15"/><path d="M209.0 417.4 L236.5 417.4" fill="none" stroke="#4646b0" stroke-width="1.15"/><path d="M238.5 417.4 L257.7 417.4" fill="none" stroke="#4646b0" stroke-width="1.15"/><path d="M277.3 417.4 L333.3 417.4" fill="none" stroke="#4646b0" stroke-width="1.15"/><path d="M352.9 417.4 L405.7 417.4" fill="none" stroke="#4646b0" stroke-width="1.15"/><path d="M218.2 417.4 L218.2 441.2 L254.3 441.2" fill="none" stroke="#4646b0" stroke-width="1.15"/><path d="M256.3 441.2 L288.1 441.2" fill="none" stroke="#4646b0" stroke-width="1.15"/><path d="M218.2 441.2 L218.2 446" fill="none" stroke="#4646b0" stroke-width="1.15"/><path d="M218.2 468.5 L218.2 473.6" fill="none" stroke="#4646b0" stroke-width="1.15"/><path d="M288.1 389.3 L288.1 431.6 L297.3 431.6" fill="none" stroke="#4646b0" stroke-width="1.15"/><path d="M288.1 389.3 L320.0 389.3" fill="none" stroke="#4646b0" stroke-width="1.15"/><path d="M322.0 389.3 L351.4 389.3" fill="none" stroke="#4646b0" stroke-width="1.15"/><path d="M371.0 389.3 L424.0 389.3" fill="none" stroke="#4646b0" stroke-width="1.15"/><path d="M426.0 389.3 L433.5 389.3 L433.5 413.8" fill="none" stroke="#4646b0" stroke-width="1.15"/><path d="M433.5 436 L433.5 452" fill="none" stroke="#4646b0" stroke-width="1.15"/><path d="M433.5 474 L433.5 492.2" fill="none" stroke="#4646b0" stroke-width="1.15"/><path d="M335 389.3 L335 361.2 L348.3 361.2" fill="none" stroke="#4646b0" stroke-width="1.15"/><path d="M350.3 361.2 L374.9 361.2" fill="none" stroke="#4646b0" stroke-width="1.15"/><path d="M394.5 361.2 L405.7 361.2" fill="none" stroke="#4646b0" stroke-width="1.15"/><path d="M358.5 361.2 L358.5 333.3 L381.2 333.3" fill="none" stroke="#4646b0" stroke-width="1.15"/><path d="M383.2 333.3 L405.7 333.3 L405.7 436.3 L316.2 436.3" fill="none" stroke="#4646b0" stroke-width="1.15"/><path d="M307.1 443.2 L307.1 497.3 L372.5 497.3 L372.5 489.5" fill="none" stroke="#4646b0" stroke-width="1.15"/><path d="M372.5 471 L372.5 469.5" fill="none" stroke="#4646b0" stroke-width="1.15"/><path d="M433.5 445.7 L461.5 445.7" fill="none" stroke="#4646b0" stroke-width="1.15"/><path d="M222.40 102.30 L222.40 104.70 L227.00 107.15 L217.80 112.05 L227.00 116.95 L217.80 121.85 L222.40 124.30 L222.40 126.70" fill="none" stroke="#3a3a4c" stroke-width="0.9" stroke-linejoin="round"/><rect x="219.4" y="177.0" width="6" height="1.8" fill="#c0c0c0"/><path d="M217.5 176.65 L227.3 176.65 M217.5 179.15 L227.3 179.15" fill="none" stroke="#3a3a4c" stroke-width="0.85" stroke-linejoin="round"/><path d="M246.20 140.30 L246.20 142.70 L250.80 145.15 L241.60 150.05 L250.80 154.95 L241.60 159.85 L246.20 162.30 L246.20 164.70" fill="none" stroke="#3a3a4c" stroke-width="0.9" stroke-linejoin="round"/><path d="M264.3 161.4 L264.3 175.79999999999998" fill="none" stroke="#3a3a4c" stroke-width="1.9" stroke-linejoin="round"/><path d="M264.3 163.4 L278.8 154.7" fill="none" stroke="#3a3a4c" stroke-width="0.9" stroke-linejoin="round"/><path d="M264.3 173.7 L278.8 182.5" fill="none" stroke="#3a3a4c" stroke-width="0.9" stroke-linejoin="round"/><path d="M278.80 182.50 L270.87 180.14 L273.05 176.55 Z" fill="none" stroke="#3a3a4c" stroke-width="0.7" stroke-linejoin="round"/><path d="M191.80 201.80 L194.25 197.20 L199.15 206.40 L204.05 197.20 L208.95 206.40 L211.40 201.80" fill="none" stroke="#3a3a4c" stroke-width="0.9" stroke-linejoin="round"/><rect x="292.6" y="198.8" width="1.8" height="6" fill="#c0c0c0"/><path d="M292.25 196.9 L292.25 206.70000000000002 M294.75 196.9 L294.75 206.70000000000002" fill="none" stroke="#3a3a4c" stroke-width="0.85" stroke-linejoin="round"/><path d="M296.3 198.8 L299.3 198.8 M297.8 197.3 L297.8 200.3" fill="none" stroke="#3a3a4c" stroke-width="0.7" stroke-linejoin="round"/><path d="M313.50 201.80 L315.95 197.20 L320.85 206.40 L325.75 197.20 L330.65 206.40 L333.10 201.80" fill="none" stroke="#3a3a4c" stroke-width="0.9" stroke-linejoin="round"/><path d="M335.6 196.4 L335.6 207.20000000000002 L341.0 201.8 Z" fill="none" stroke="#3a3a4c" stroke-width="0.9" stroke-linejoin="round"/><circle cx="349.2" cy="260.0" r="9.2" fill="none" stroke="#3a3a4c" stroke-width="0.9"/><path d="M347.3 254.2 L351.09999999999997 254.2 M349.2 252.3 L349.2 256.1" fill="none" stroke="#3a3a4c" stroke-width="0.85" stroke-linejoin="round"/><path d="M347.2 266.3 L351.2 266.3" fill="none" stroke="#3a3a4c" stroke-width="0.9" stroke-linejoin="round"/><text x="349.2" y="262.7" font-size="7.2" fill="#101010" font-weight="bold" text-anchor="middle" stroke="#101010" stroke-width="0.2">15</text><path d="M105.50 182.20 L105.50 184.60 L110.10 187.05 L100.90 191.95 L110.10 196.85 L100.90 201.75 L105.50 204.20 L105.50 206.60" fill="none" stroke="#3a3a4c" stroke-width="0.9" stroke-linejoin="round"/><rect x="95.3" y="227.2" width="1.8" height="6" fill="#c0c0c0"/><path d="M94.95 225.29999999999998 L94.95 235.1 M97.45 225.29999999999998 L97.45 235.1" fill="none" stroke="#3a3a4c" stroke-width="0.85" stroke-linejoin="round"/><path d="M98.8 227.4 L101.8 227.4 M100.3 225.9 L100.3 228.9" fill="none" stroke="#3a3a4c" stroke-width="0.7" stroke-linejoin="round"/><path d="M105.50 258.20 L105.50 260.60 L110.10 263.05 L100.90 267.95 L110.10 272.85 L100.90 277.75 L105.50 280.20 L105.50 282.60" fill="none" stroke="#3a3a4c" stroke-width="0.9" stroke-linejoin="round"/><path d="M133.3 222.20000000000002 L133.3 236.6" fill="none" stroke="#3a3a4c" stroke-width="1.9" stroke-linejoin="round"/><path d="M133.3 223.4 L147.5 215.5" fill="none" stroke="#3a3a4c" stroke-width="0.9" stroke-linejoin="round"/><path d="M133.3 234.8 L147.5 243.3" fill="none" stroke="#3a3a4c" stroke-width="0.9" stroke-linejoin="round"/><path d="M135.30 222.40 L141.28 216.72 L143.25 220.20 Z" fill="none" stroke="#3a3a4c" stroke-width="0.7" stroke-linejoin="round"/><path d="M147.50 267.10 L147.50 269.50 L152.10 271.95 L142.90 276.85 L152.10 281.75 L142.90 286.65 L147.50 289.10 L147.50 291.50" fill="none" stroke="#3a3a4c" stroke-width="0.9" stroke-linejoin="round"/><path d="M142.1 304.2 L152.9 304.2 L147.5 309.59999999999997 Z" fill="none" stroke="#3a3a4c" stroke-width="0.9" stroke-linejoin="round"/><rect x="172.5" y="224.29999999999998" width="6" height="1.8" fill="#c0c0c0"/><path d="M170.6 223.95 L180.4 223.95 M170.6 226.45 L180.4 226.45" fill="none" stroke="#3a3a4c" stroke-width="0.85" stroke-linejoin="round"/><path d="M175.50 258.60 L175.50 261.00 L180.10 263.45 L170.90 268.35 L180.10 273.25 L170.90 278.15 L175.50 280.60 L175.50 283.00" fill="none" stroke="#3a3a4c" stroke-width="0.9" stroke-linejoin="round"/><rect x="226.79999999999998" y="217.7" width="1.8" height="6" fill="#c0c0c0"/><path d="M226.45 215.79999999999998 L226.45 225.6 M228.95 215.79999999999998 L228.95 225.6" fill="none" stroke="#3a3a4c" stroke-width="0.85" stroke-linejoin="round"/><path d="M231.4 237.0 L231.4 251.39999999999998" fill="none" stroke="#3a3a4c" stroke-width="1.9" stroke-linejoin="round"/><path d="M231.4 239.0 L245.9 230.29999999999998" fill="none" stroke="#3a3a4c" stroke-width="0.9" stroke-linejoin="round"/><path d="M231.4 249.29999999999998 L245.9 258.09999999999997" fill="none" stroke="#3a3a4c" stroke-width="0.9" stroke-linejoin="round"/><path d="M245.90 258.10 L237.97 255.74 L240.15 252.15 Z" fill="none" stroke="#3a3a4c" stroke-width="0.7" stroke-linejoin="round"/><path d="M264.3 250.90000000000003 L264.3 265.3" fill="none" stroke="#3a3a4c" stroke-width="1.9" stroke-linejoin="round"/><path d="M264.3 252.90000000000003 L278.8 244.20000000000002" fill="none" stroke="#3a3a4c" stroke-width="0.9" stroke-linejoin="round"/><path d="M264.3 263.20000000000005 L278.8 272.0" fill="none" stroke="#3a3a4c" stroke-width="0.9" stroke-linejoin="round"/><path d="M278.80 272.00 L270.87 269.64 L273.05 266.05 Z" fill="none" stroke="#3a3a4c" stroke-width="0.7" stroke-linejoin="round"/><path d="M246.20 266.60 L246.20 269.00 L250.80 271.45 L241.60 276.35 L250.80 281.25 L241.60 286.15 L246.20 288.60 L246.20 291.00" fill="none" stroke="#3a3a4c" stroke-width="0.9" stroke-linejoin="round"/><path d="M79.40 352.00 L81.85 347.40 L86.75 356.60 L91.65 347.40 L96.55 356.60 L99.00 352.00" fill="none" stroke="#3a3a4c" stroke-width="0.9" stroke-linejoin="round"/><path d="M140.00 352.00 L142.45 347.40 L147.35 356.60 L152.25 347.40 L157.15 356.60 L159.60 352.00" fill="none" stroke="#3a3a4c" stroke-width="0.9" stroke-linejoin="round"/><rect x="90.6" y="382" width="1.8" height="6" fill="#c0c0c0"/><path d="M90.25 380.1 L90.25 389.9 M92.75 380.1 L92.75 389.9" fill="none" stroke="#3a3a4c" stroke-width="0.85" stroke-linejoin="round"/><rect x="151.1" y="382" width="1.8" height="6" fill="#c0c0c0"/><path d="M150.75 380.1 L150.75 389.9 M153.25 380.1 L153.25 389.9" fill="none" stroke="#3a3a4c" stroke-width="0.85" stroke-linejoin="round"/><path d="M196.90 385.00 L199.35 380.40 L204.25 389.60 L209.15 380.40 L214.05 389.60 L216.50 385.00" fill="none" stroke="#3a3a4c" stroke-width="0.9" stroke-linejoin="round"/><path d="M217.0 379.6 L217.0 390.4 L222.4 385 Z" fill="none" stroke="#3a3a4c" stroke-width="0.9" stroke-linejoin="round"/><circle cx="63" cy="438.8" r="9.2" fill="none" stroke="#3a3a4c" stroke-width="0.9"/><path d="M61.1 433.0 L64.9 433.0 M63 431.1 L63 434.90000000000003" fill="none" stroke="#3a3a4c" stroke-width="0.85" stroke-linejoin="round"/><path d="M61.0 445.1 L65.0 445.1" fill="none" stroke="#3a3a4c" stroke-width="0.9" stroke-linejoin="round"/><text x="63" y="441.5" font-size="7.2" fill="#101010" font-weight="bold" text-anchor="middle" stroke="#101010" stroke-width="0.2">V7</text><path d="M57.6 478.6 L68.4 478.6 L63 484.0 Z" fill="none" stroke="#3a3a4c" stroke-width="0.9" stroke-linejoin="round"/><path d="M209.0 412.0 L209.0 422.79999999999995 L203.6 417.4 Z" fill="none" stroke="#3a3a4c" stroke-width="0.9" stroke-linejoin="round"/><rect x="236.6" y="414.4" width="1.8" height="6" fill="#c0c0c0"/><path d="M236.25 412.5 L236.25 422.29999999999995 M238.75 412.5 L238.75 422.29999999999995" fill="none" stroke="#3a3a4c" stroke-width="0.85" stroke-linejoin="round"/><path d="M257.70 417.40 L260.15 412.80 L265.05 422.00 L269.95 412.80 L274.85 422.00 L277.30 417.40" fill="none" stroke="#3a3a4c" stroke-width="0.9" stroke-linejoin="round"/><path d="M333.30 417.40 L335.75 412.80 L340.65 422.00 L345.55 412.80 L350.45 422.00 L352.90 417.40" fill="none" stroke="#3a3a4c" stroke-width="0.9" stroke-linejoin="round"/><rect x="254.4" y="438.2" width="1.8" height="6" fill="#c0c0c0"/><path d="M254.05 436.3 L254.05 446.09999999999997 M256.55 436.3 L256.55 446.09999999999997" fill="none" stroke="#3a3a4c" stroke-width="0.85" stroke-linejoin="round"/><path d="M218.20 445.40 L218.20 447.80 L222.80 450.25 L213.60 455.15 L222.80 460.05 L213.60 464.95 L218.20 467.40 L218.20 469.80" fill="none" stroke="#3a3a4c" stroke-width="0.9" stroke-linejoin="round"/><rect x="188.7" y="470.6" width="1.8" height="6" fill="#c0c0c0"/><path d="M188.35 468.70000000000005 L188.35 478.5 M190.85 468.70000000000005 L190.85 478.5" fill="none" stroke="#3a3a4c" stroke-width="0.85" stroke-linejoin="round"/><path d="M257.10 473.60 L259.55 469.00 L264.45 478.20 L269.35 469.00 L274.25 478.20 L276.70 473.60" fill="none" stroke="#3a3a4c" stroke-width="0.9" stroke-linejoin="round"/><rect x="320.1" y="386.3" width="1.8" height="6" fill="#c0c0c0"/><path d="M319.75 384.40000000000003 L319.75 394.2 M322.25 384.40000000000003 L322.25 394.2" fill="none" stroke="#3a3a4c" stroke-width="0.85" stroke-linejoin="round"/><path d="M351.40 389.30 L353.85 384.70 L358.75 393.90 L363.65 384.70 L368.55 393.90 L371.00 389.30" fill="none" stroke="#3a3a4c" stroke-width="0.9" stroke-linejoin="round"/><rect x="424.1" y="386.3" width="1.8" height="6" fill="#c0c0c0"/><path d="M423.75 384.40000000000003 L423.75 394.2 M426.25 384.40000000000003 L426.25 394.2" fill="none" stroke="#3a3a4c" stroke-width="0.85" stroke-linejoin="round"/><path d="M433.50 412.80 L433.50 415.20 L438.10 417.65 L428.90 422.55 L438.10 427.45 L428.90 432.35 L433.50 434.80 L433.50 437.20" fill="none" stroke="#3a3a4c" stroke-width="0.9" stroke-linejoin="round"/><path d="M433.50 450.80 L433.50 453.20 L438.10 455.65 L428.90 460.55 L438.10 465.45 L428.90 470.35 L433.50 472.80 L433.50 475.20" fill="none" stroke="#3a3a4c" stroke-width="0.9" stroke-linejoin="round"/><path d="M428.1 492.2 L438.9 492.2 L433.5 497.59999999999997 Z" fill="none" stroke="#3a3a4c" stroke-width="0.9" stroke-linejoin="round"/><rect x="348.40000000000003" y="358.2" width="1.8" height="6" fill="#c0c0c0"/><path d="M348.05 356.3 L348.05 366.09999999999997 M350.55 356.3 L350.55 366.09999999999997" fill="none" stroke="#3a3a4c" stroke-width="0.85" stroke-linejoin="round"/><path d="M374.90 361.20 L377.35 356.60 L382.25 365.80 L387.15 356.60 L392.05 365.80 L394.50 361.20" fill="none" stroke="#3a3a4c" stroke-width="0.9" stroke-linejoin="round"/><rect x="381.3" y="330.3" width="1.8" height="6" fill="#c0c0c0"/><path d="M380.95 328.40000000000003 L380.95 338.2 M383.45 328.40000000000003 L383.45 338.2" fill="none" stroke="#3a3a4c" stroke-width="0.85" stroke-linejoin="round"/><path d="M297.3 426.8 L297.3 446.0 L316.2 436.4 Z" fill="none" stroke="#3a3a4c" stroke-width="0.9" stroke-linejoin="round"/><path d="M299.2 431.6 L302.8 431.6" fill="none" stroke="#3a3a4c" stroke-width="0.8" stroke-linejoin="round"/><path d="M299.3 441.0 L302.7 441.0 M301.0 439.3 L301.0 442.7" fill="none" stroke="#3a3a4c" stroke-width="0.7" stroke-linejoin="round"/><path d="M307.1 430.6 L307.1 431.6 M307.1 441.3 L307.1 443.2" fill="none" stroke="#3a3a4c" stroke-width="0.9" stroke-linejoin="round"/><circle cx="372.5" cy="480.3" r="9.2" fill="none" stroke="#3a3a4c" stroke-width="0.9"/><path d="M370.6 474.5 L374.4 474.5 M372.5 472.6 L372.5 476.40000000000003" fill="none" stroke="#3a3a4c" stroke-width="0.85" stroke-linejoin="round"/><path d="M370.5 486.6 L374.5 486.6" fill="none" stroke="#3a3a4c" stroke-width="0.9" stroke-linejoin="round"/><text x="372.5" y="483.0" font-size="7.2" fill="#101010" font-weight="bold" text-anchor="middle" stroke="#101010" stroke-width="0.2">15</text><path d="M367.5 469.5 L377.5 469.5 L372.5 463.9 Z" fill="none" stroke="#3a3a4c" stroke-width="0.9" stroke-linejoin="round"/><circle cx="222.4" cy="136.2" r="1.6" fill="#1010b4"/><circle cx="278.6" cy="94" r="1.6" fill="#1010b4"/><circle cx="222.4" cy="94" r="1.6" fill="#1010b4"/><circle cx="246.2" cy="168.8" r="1.6" fill="#1010b4"/><circle cx="175.5" cy="201.8" r="1.6" fill="#1010b4"/><circle cx="222.4" cy="201.8" r="1.6" fill="#1010b4"/><circle cx="278.6" cy="201.8" r="1.6" fill="#1010b4"/><circle cx="306.7" cy="201.8" r="1.6" fill="#1010b4"/><circle cx="349.2" cy="229.8" r="1.6" fill="#1010b4"/><circle cx="105.5" cy="230.2" r="1.6" fill="#1010b4"/><circle cx="147.5" cy="243.3" r="1.6" fill="#1010b4"/><circle cx="246.2" cy="220.7" r="1.6" fill="#1010b4"/><circle cx="217.6" cy="244.2" r="1.6" fill="#1010b4"/><circle cx="246.2" cy="258.3" r="1.6" fill="#1010b4"/><circle cx="147.5" cy="295.5" r="1.6" fill="#1010b4"/><circle cx="175.5" cy="295.5" r="1.6" fill="#1010b4"/><circle cx="246.2" cy="295.5" r="1.6" fill="#1010b4"/><circle cx="278.6" cy="295.5" r="1.6" fill="#1010b4"/><circle cx="114.6" cy="352" r="1.6" fill="#1010b4"/><circle cx="129.1" cy="352" r="1.6" fill="#1010b4"/><circle cx="63" cy="385" r="1.6" fill="#1010b4"/><circle cx="175.5" cy="385" r="1.6" fill="#1010b4"/><circle cx="218.2" cy="417.4" r="1.6" fill="#1010b4"/><circle cx="288.1" cy="417.4" r="1.6" fill="#1010b4"/><circle cx="405.7" cy="417.4" r="1.6" fill="#1010b4"/><circle cx="218.2" cy="441.2" r="1.6" fill="#1010b4"/><circle cx="288.1" cy="441.2" r="1.6" fill="#1010b4"/><circle cx="218.2" cy="473.6" r="1.6" fill="#1010b4"/><circle cx="335" cy="389.3" r="1.6" fill="#1010b4"/><circle cx="405.7" cy="389.3" r="1.6" fill="#1010b4"/><circle cx="358.5" cy="361.2" r="1.6" fill="#1010b4"/><circle cx="405.7" cy="361.2" r="1.6" fill="#1010b4"/><circle cx="433.5" cy="445.7" r="1.6" fill="#1010b4"/><circle cx="452.5" cy="445.7" r="1.6" fill="#1010b4"/><text x="228.0" y="112.85" font-size="6.7" fill="#101010" font-weight="bold" text-anchor="start" stroke="#101010" stroke-width="0.22">R4</text><text x="228.0" y="123.85" font-size="6.7" fill="#101010" font-weight="bold" text-anchor="start" stroke="#101010" stroke-width="0.22">33</text><text x="227.3" y="149.15" font-size="6.7" fill="#101010" font-weight="bold" text-anchor="start" textLength="12.1" lengthAdjust="spacingAndGlyphs" stroke="#101010" stroke-width="0.22">R11</text><text x="227.5" y="159.35" font-size="6.7" fill="#101010" font-weight="bold" text-anchor="start" textLength="12.5" lengthAdjust="spacingAndGlyphs" stroke="#101010" stroke-width="0.22">270</text><text x="225.2" y="173.75" font-size="6.7" fill="#101010" font-weight="bold" text-anchor="start" stroke="#101010" stroke-width="0.22">C4</text><text x="225.4" y="187.55" font-size="6.7" fill="#101010" font-weight="bold" text-anchor="start" textLength="15.6" lengthAdjust="spacingAndGlyphs" stroke="#101010" stroke-width="0.22">220µ</text><text x="276.2" y="167.05" font-size="6.7" fill="#101010" font-weight="bold" text-anchor="start" stroke="#101010" stroke-width="0.22">Q2</text><text x="276.5" y="177.35" font-size="6.7" fill="#101010" font-weight="bold" text-anchor="start" textLength="24.0" lengthAdjust="spacingAndGlyphs" stroke="#101010" stroke-width="0.22">2N3055</text><text transform="translate(309.05,160.0) rotate(-90)" x="0" y="0" font-size="6.7" fill="#101010" font-weight="bold" stroke="#101010" stroke-width="0.22" textLength="14.0" lengthAdjust="spacingAndGlyphs">Out</text><text x="289.0" y="195.65" font-size="6.7" fill="#101010" font-weight="bold" text-anchor="start" stroke="#101010" stroke-width="0.22">C2</text><text x="285.2" y="212.95" font-size="6.7" fill="#101010" font-weight="bold" text-anchor="start" textLength="14.5" lengthAdjust="spacingAndGlyphs" stroke="#101010" stroke-width="0.22">3m3</text><text x="318.0" y="195.35" font-size="6.7" fill="#101010" font-weight="bold" text-anchor="start" stroke="#101010" stroke-width="0.22">R7</text><text x="321.0" y="212.95" font-size="6.7" fill="#101010" font-weight="bold" text-anchor="start" stroke="#101010" stroke-width="0.22">4</text><text x="365.3" y="154.75" font-size="6.7" fill="#101010" font-weight="bold" text-anchor="start" textLength="49.0" lengthAdjust="spacingAndGlyphs" stroke="#101010" stroke-width="0.22">.Four 1k V(Out)</text><text x="367.8" y="169.05" font-size="6.7" fill="#101010" font-weight="bold" text-anchor="start" textLength="54.0" lengthAdjust="spacingAndGlyphs" stroke="#101010" stroke-width="0.22">.tran 0 200m 2m</text><text x="336.7" y="246.95" font-size="6.7" fill="#101010" font-weight="bold" text-anchor="start" stroke="#101010" stroke-width="0.22">V1</text><text transform="translate(366.35,294.6) rotate(-90)" x="0" y="0" font-size="6.7" fill="#101010" font-weight="bold" stroke="#101010" stroke-width="0.22" textLength="68.2" lengthAdjust="spacingAndGlyphs">Rser=0.1 Cpar=100n</text><text x="111.0" y="192.15" font-size="6.7" fill="#101010" font-weight="bold" text-anchor="start" stroke="#101010" stroke-width="0.22">R5</text><text x="111.0" y="203.25" font-size="6.7" fill="#101010" font-weight="bold" text-anchor="start" textLength="16.5" lengthAdjust="spacingAndGlyphs" stroke="#101010" stroke-width="0.22">100k</text><text x="91.8" y="223.55" font-size="6.7" fill="#101010" font-weight="bold" text-anchor="start" stroke="#101010" stroke-width="0.22">C1</text><text x="90.5" y="241.05" font-size="6.7" fill="#101010" font-weight="bold" text-anchor="start" textLength="12.4" lengthAdjust="spacingAndGlyphs" stroke="#101010" stroke-width="0.22">22µ</text><text x="111.0" y="267.25" font-size="6.7" fill="#101010" font-weight="bold" text-anchor="start" stroke="#101010" stroke-width="0.22">R8</text><text x="111.0" y="278.35" font-size="6.7" fill="#101010" font-weight="bold" text-anchor="start" textLength="12.0" lengthAdjust="spacingAndGlyphs" stroke="#101010" stroke-width="0.22">33k</text><text x="145.0" y="229.35" font-size="6.7" fill="#101010" font-weight="bold" text-anchor="start" textLength="24.0" lengthAdjust="spacingAndGlyphs" stroke="#101010" stroke-width="0.22">2N2907</text><text x="147.0" y="239.15" font-size="6.7" fill="#101010" font-weight="bold" text-anchor="start" stroke="#101010" stroke-width="0.22">Q4</text><text x="178.3" y="220.85" font-size="6.7" fill="#101010" font-weight="bold" text-anchor="start" stroke="#101010" stroke-width="0.22">C3</text><text x="178.6" y="234.75" font-size="6.7" fill="#101010" font-weight="bold" text-anchor="start" textLength="20.2" lengthAdjust="spacingAndGlyphs" stroke="#101010" stroke-width="0.22">2200µ</text><text x="132.7" y="275.75" font-size="6.7" fill="#101010" font-weight="bold" text-anchor="start" stroke="#101010" stroke-width="0.22">R2</text><text x="129.6" y="286.35" font-size="6.7" fill="#101010" font-weight="bold" text-anchor="start" textLength="11.7" lengthAdjust="spacingAndGlyphs" stroke="#101010" stroke-width="0.22">8k2</text><text x="181.8" y="267.65" font-size="6.7" fill="#101010" font-weight="bold" text-anchor="start" stroke="#101010" stroke-width="0.22">R1</text><text x="181.8" y="278.35" font-size="6.7" fill="#101010" font-weight="bold" text-anchor="start" textLength="12.2" lengthAdjust="spacingAndGlyphs" stroke="#101010" stroke-width="0.22">100</text><text x="197.0" y="195.45" font-size="6.7" fill="#101010" font-weight="bold" text-anchor="start" stroke="#101010" stroke-width="0.22">R6</text><text x="195.9" y="212.65" font-size="6.7" fill="#101010" font-weight="bold" text-anchor="start" textLength="10.9" lengthAdjust="spacingAndGlyphs" stroke="#101010" stroke-width="0.22">2k7</text><text x="222.9" y="214.25" font-size="6.7" fill="#101010" font-weight="bold" text-anchor="start" stroke="#101010" stroke-width="0.22">C5</text><text x="221.3" y="231.55" font-size="6.7" fill="#101010" font-weight="bold" text-anchor="start" textLength="12.0" lengthAdjust="spacingAndGlyphs" stroke="#101010" stroke-width="0.22">22p</text><text x="250.2" y="236.05" font-size="6.7" fill="#101010" font-weight="bold" text-anchor="start" stroke="#101010" stroke-width="0.22">Q3</text><text x="237.4" y="244.55" font-size="6.7" fill="#101010" font-weight="bold" text-anchor="start" textLength="33.1" lengthAdjust="spacingAndGlyphs" stroke="#101010" stroke-width="0.22">2SCR293P</text><text x="275.8" y="256.35" font-size="6.7" fill="#101010" font-weight="bold" text-anchor="start" stroke="#101010" stroke-width="0.22">Q1</text><text x="276.9" y="266.55" font-size="6.7" fill="#101010" font-weight="bold" text-anchor="start" textLength="24.5" lengthAdjust="spacingAndGlyphs" stroke="#101010" stroke-width="0.22">2N3055</text><text x="251.9" y="276.55" font-size="6.7" fill="#101010" font-weight="bold" text-anchor="start" stroke="#101010" stroke-width="0.22">R3</text><text x="251.9" y="287.85" font-size="6.7" fill="#101010" font-weight="bold" text-anchor="start" textLength="12.1" lengthAdjust="spacingAndGlyphs" stroke="#101010" stroke-width="0.22">180</text><text x="82.6" y="345.65" font-size="6.7" fill="#101010" font-weight="bold" text-anchor="start" textLength="12.8" lengthAdjust="spacingAndGlyphs" stroke="#101010" stroke-width="0.22">R18</text><text x="80.5" y="362.95" font-size="6.7" fill="#101010" font-weight="bold" text-anchor="start" textLength="16.6" lengthAdjust="spacingAndGlyphs" stroke="#101010" stroke-width="0.22">910k</text><text x="85.2" y="378.75" font-size="6.7" fill="#101010" font-weight="bold" text-anchor="start" textLength="11.9" lengthAdjust="spacingAndGlyphs" stroke="#101010" stroke-width="0.22">C13</text><text x="85.2" y="395.35" font-size="6.7" fill="#101010" font-weight="bold" text-anchor="start" textLength="11.9" lengthAdjust="spacingAndGlyphs" stroke="#101010" stroke-width="0.22">3n6</text><text x="143.8" y="345.65" font-size="6.7" fill="#101010" font-weight="bold" text-anchor="start" textLength="12.4" lengthAdjust="spacingAndGlyphs" stroke="#101010" stroke-width="0.22">R22</text><text x="144.0" y="362.95" font-size="6.7" fill="#101010" font-weight="bold" text-anchor="start" textLength="12.2" lengthAdjust="spacingAndGlyphs" stroke="#101010" stroke-width="0.22">75k</text><text x="146.0" y="378.75" font-size="6.7" fill="#101010" font-weight="bold" text-anchor="start" textLength="12.3" lengthAdjust="spacingAndGlyphs" stroke="#101010" stroke-width="0.22">C14</text><text x="148.7" y="395.35" font-size="6.7" fill="#101010" font-weight="bold" text-anchor="start" stroke="#101010" stroke-width="0.22">1n</text><text x="199.5" y="378.15" font-size="6.7" fill="#101010" font-weight="bold" text-anchor="start" textLength="12.8" lengthAdjust="spacingAndGlyphs" stroke="#101010" stroke-width="0.22">R21</text><text x="200.1" y="395.65" font-size="6.7" fill="#101010" font-weight="bold" text-anchor="start" textLength="12.2" lengthAdjust="spacingAndGlyphs" stroke="#101010" stroke-width="0.22">600</text><text x="232.1" y="411.25" font-size="6.7" fill="#101010" font-weight="bold" text-anchor="start" stroke="#101010" stroke-width="0.22">C7</text><text x="228.5" y="428.35" font-size="6.7" fill="#101010" font-weight="bold" text-anchor="start" textLength="16.4" lengthAdjust="spacingAndGlyphs" stroke="#101010" stroke-width="0.22">100µ</text><text x="259.8" y="411.25" font-size="6.7" fill="#101010" font-weight="bold" text-anchor="start" textLength="13.4" lengthAdjust="spacingAndGlyphs" stroke="#101010" stroke-width="0.22">R13</text><text x="260.9" y="428.35" font-size="6.7" fill="#101010" font-weight="bold" text-anchor="start" textLength="12.3" lengthAdjust="spacingAndGlyphs" stroke="#101010" stroke-width="0.22">220</text><text x="251.3" y="434.65" font-size="6.7" fill="#101010" font-weight="bold" text-anchor="start" stroke="#101010" stroke-width="0.22">C6</text><text x="247.5" y="452.15" font-size="6.7" fill="#101010" font-weight="bold" text-anchor="start" textLength="16.4" lengthAdjust="spacingAndGlyphs" stroke="#101010" stroke-width="0.22">150p</text><text x="198.4" y="447.05" font-size="6.7" fill="#101010" font-weight="bold" text-anchor="start" textLength="13.1" lengthAdjust="spacingAndGlyphs" stroke="#101010" stroke-width="0.22">R10</text><text x="195.8" y="456.85" font-size="6.7" fill="#101010" font-weight="bold" text-anchor="start" textLength="12.2" lengthAdjust="spacingAndGlyphs" stroke="#101010" stroke-width="0.22">47k</text><text x="183.5" y="467.75" font-size="6.7" fill="#101010" font-weight="bold" text-anchor="start" textLength="12.7" lengthAdjust="spacingAndGlyphs" stroke="#101010" stroke-width="0.22">C12</text><text x="183.5" y="485.15" font-size="6.7" fill="#101010" font-weight="bold" text-anchor="start" textLength="12.9" lengthAdjust="spacingAndGlyphs" stroke="#101010" stroke-width="0.22">22µ</text><text x="262.2" y="467.55" font-size="6.7" fill="#101010" font-weight="bold" text-anchor="start" stroke="#101010" stroke-width="0.22">R9</text><text x="262.7" y="485.15" font-size="6.7" fill="#101010" font-weight="bold" text-anchor="start" stroke="#101010" stroke-width="0.22">1k</text><text x="376.0" y="326.65" font-size="6.7" fill="#101010" font-weight="bold" text-anchor="start" textLength="12.3" lengthAdjust="spacingAndGlyphs" stroke="#101010" stroke-width="0.22">C10</text><text x="373.8" y="343.65" font-size="6.7" fill="#101010" font-weight="bold" text-anchor="start" textLength="16.6" lengthAdjust="spacingAndGlyphs" stroke="#101010" stroke-width="0.22">330p</text><text x="345.0" y="355.35" font-size="6.7" fill="#101010" font-weight="bold" text-anchor="start" stroke="#101010" stroke-width="0.22">C9</text><text x="340.8" y="372.45" font-size="6.7" fill="#101010" font-weight="bold" text-anchor="start" textLength="16.0" lengthAdjust="spacingAndGlyphs" stroke="#101010" stroke-width="0.22">3n27</text><text x="377.7" y="355.35" font-size="6.7" fill="#101010" font-weight="bold" text-anchor="start" textLength="12.7" lengthAdjust="spacingAndGlyphs" stroke="#101010" stroke-width="0.22">R15</text><text x="378.0" y="372.45" font-size="6.7" fill="#101010" font-weight="bold" text-anchor="start" textLength="12.4" lengthAdjust="spacingAndGlyphs" stroke="#101010" stroke-width="0.22">180</text><text x="316.7" y="383.15" font-size="6.7" fill="#101010" font-weight="bold" text-anchor="start" stroke="#101010" stroke-width="0.22">C8</text><text x="311.6" y="400.65" font-size="6.7" fill="#101010" font-weight="bold" text-anchor="start" textLength="19.6" lengthAdjust="spacingAndGlyphs" stroke="#101010" stroke-width="0.22">0.01µ</text><text x="353.6" y="383.15" font-size="6.7" fill="#101010" font-weight="bold" text-anchor="start" textLength="12.8" lengthAdjust="spacingAndGlyphs" stroke="#101010" stroke-width="0.22">R12</text><text x="352.5" y="400.65" font-size="6.7" fill="#101010" font-weight="bold" text-anchor="start" textLength="15.5" lengthAdjust="spacingAndGlyphs" stroke="#101010" stroke-width="0.22">24k3</text><text x="417.5" y="383.15" font-size="6.7" fill="#101010" font-weight="bold" text-anchor="start" textLength="12.4" lengthAdjust="spacingAndGlyphs" stroke="#101010" stroke-width="0.22">C11</text><text x="416.0" y="400.65" font-size="6.7" fill="#101010" font-weight="bold" text-anchor="start" textLength="16.5" lengthAdjust="spacingAndGlyphs" stroke="#101010" stroke-width="0.22">100µ</text><text x="335.0" y="411.25" font-size="6.7" fill="#101010" font-weight="bold" text-anchor="start" textLength="12.8" lengthAdjust="spacingAndGlyphs" stroke="#101010" stroke-width="0.22">R14</text><text x="333.3" y="428.35" font-size="6.7" fill="#101010" font-weight="bold" text-anchor="start" textLength="16.0" lengthAdjust="spacingAndGlyphs" stroke="#101010" stroke-width="0.22">330k</text><text x="311.5" y="429.35" font-size="6.7" fill="#101010" font-weight="bold" text-anchor="start" stroke="#101010" stroke-width="0.22">U1</text><text x="311.5" y="448.15" font-size="6.7" fill="#101010" font-weight="bold" text-anchor="start" textLength="16.9" lengthAdjust="spacingAndGlyphs" stroke="#101010" stroke-width="0.22">OP27</text><text x="439.1" y="422.15" font-size="6.7" fill="#101010" font-weight="bold" text-anchor="start" textLength="12.1" lengthAdjust="spacingAndGlyphs" stroke="#101010" stroke-width="0.22">R16</text><text x="439.1" y="432.45" font-size="6.7" fill="#101010" font-weight="bold" text-anchor="start" textLength="11.9" lengthAdjust="spacingAndGlyphs" stroke="#101010" stroke-width="0.22">100</text><text x="439.1" y="459.55" font-size="6.7" fill="#101010" font-weight="bold" text-anchor="start" textLength="12.9" lengthAdjust="spacingAndGlyphs" stroke="#101010" stroke-width="0.22">R17</text><text x="439.1" y="470.55" font-size="6.7" fill="#101010" font-weight="bold" text-anchor="start" textLength="16.2" lengthAdjust="spacingAndGlyphs" stroke="#101010" stroke-width="0.22">100K</text><text x="376.0" y="469.35" font-size="6.7" fill="#101010" font-weight="bold" text-anchor="start" stroke="#101010" stroke-width="0.22">V2</text><text transform="translate(359.05,513.3) rotate(-90)" x="0" y="0" font-size="6.7" fill="#101010" font-weight="bold" stroke="#101010" stroke-width="0.22" textLength="68.3" lengthAdjust="spacingAndGlyphs">Rser=0.1 Cpar=100n</text><text transform="translate(61.65,402.5) rotate(-90)" x="0" y="0" font-size="6.7" fill="#101010" font-weight="bold" stroke="#101010" stroke-width="0.22" textLength="7.5" lengthAdjust="spacingAndGlyphs">In</text><text transform="translate(55.050000000000004,436.0) rotate(-90)" x="0" y="0" font-size="6.7" fill="#101010" font-weight="bold" stroke="#101010" stroke-width="0.22" textLength="15.5" lengthAdjust="spacingAndGlyphs">AC 1</text><text transform="translate(78.85,452.8) rotate(-90)" x="0" y="0" font-size="6.7" fill="#101010" font-weight="bold" stroke="#101010" stroke-width="0.22" textLength="31.1" lengthAdjust="spacingAndGlyphs">Rser=600</text><text transform="translate(46.65,542.6) rotate(-90)" x="0" y="0" font-size="6.7" fill="#101010" font-weight="bold" stroke="#101010" stroke-width="0.22" textLength="121.6" lengthAdjust="spacingAndGlyphs">PULSE(-0.05 0.1 0 20u 20u 0.5m 1m)</text></g><rect x="0" y="551" width="<function W at 0x7f4d14208fe0>" height="12" fill="#f0f0f0" /><text x="1.2" y="560.8" font-size="7.6" fill="#202020" font-weight="normal" text-anchor="start" textLength="45" lengthAdjust="spacingAndGlyphs" stroke="#202020" stroke-width="0.15">x = 76.156ms</text><text x="54.6" y="560.8" font-size="7.6" fill="#202020" font-weight="normal" text-anchor="start" textLength="46.8" lengthAdjust="spacingAndGlyphs" stroke="#202020" stroke-width="0.15">y = 124.53mV</text></svg></body></html>
